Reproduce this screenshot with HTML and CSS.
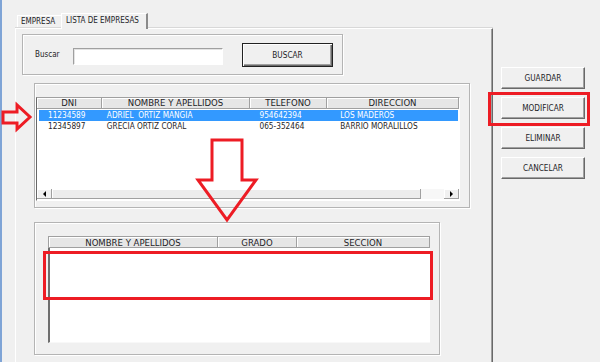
FILE: index.html
```html
<!DOCTYPE html>
<html>
<head>
  <meta charset="utf-8">
  <title>Lista de empresas</title>
  <link rel="stylesheet" href="styles.css">
</head>
<body>
<div class="window">
  <div class="tabstrip">
    <div class="tab">EMPRESA</div>
    <div class="tab tab-active">LISTA DE EMPRESAS</div>
  </div>
  <div class="main">
    <div class="page">
      <div class="group search">
        <span class="label">Buscar</span>
        <input class="textbox" type="text">
        <button class="btn btn-default">BUSCAR</button>
      </div>

      <div class="group list-group">
        <div class="listview">
          <div class="lv-head">
            <div class="hcell c-dni">DNI</div>
            <div class="hcell c-nom">NOMBRE Y APELLIDOS</div>
            <div class="hcell c-tel">TELEFONO</div>
            <div class="hcell c-dir">DIRECCION</div>
          </div>
          <div class="lv-row selected">
            <div class="cell c-dni">11234589</div>
            <div class="cell c-nom">ADRIEL&nbsp; ORTIZ MANGIA</div>
            <div class="cell c-tel">954642394</div>
            <div class="cell c-dir">LOS MADEROS</div>
          </div>
          <div class="lv-row">
            <div class="cell c-dni">12345897</div>
            <div class="cell c-nom">GRECIA ORTIZ CORAL</div>
            <div class="cell c-tel">065-352464</div>
            <div class="cell c-dir">BARRIO MORALILLOS</div>
          </div>
          <div class="lv-fill"></div>
          <div class="hscroll">
            <div class="sb-btn"><span class="tri tri-left"></span></div>
            <div class="sb-thumb"></div>
            <div class="sb-track"></div>
            <div class="sb-btn"><span class="tri tri-right"></span></div>
          </div>
        </div>
      </div>

      <div class="group detail-group">
        <div class="grid">
          <div class="grid-head">
            <div class="hcell g-nom">NOMBRE Y APELLIDOS</div>
            <div class="hcell g-gra">GRADO</div>
            <div class="hcell g-sec">SECCION</div>
          </div>
          <div class="grid-body"></div>
        </div>
      </div>
    </div>

    <div class="actions">
      <button class="btn">GUARDAR</button>
      <button class="btn">MODIFICAR</button>
      <button class="btn">ELIMINAR</button>
      <button class="btn">CANCELAR</button>
    </div>
  </div>
</div>

<!-- marcas rojas encima de la captura -->
<div class="mark mark-modificar"></div>
<div class="mark mark-detalle"></div>
<svg class="arrow arrow-right" width="34" height="34" viewBox="0 0 34 34">
  <polygon points="3,12 17,12 17,5 30,17 17,29 17,23 3,23" />
</svg>
<svg class="arrow arrow-down" width="75" height="90" viewBox="0 0 75 90">
  <polygon points="22,5 52,5 52,45 66,45 37,85 8,45 22,45" />
</svg>
</body>
</html>
```

FILE: styles.css
```css
* {
  box-sizing: border-box;
}

body {
  margin: 0;
  width: 600px;
  height: 362px;
  overflow: hidden;
  position: relative;
  background: #f0f0f0;
  font-family: "Liberation Sans Narrow", "DejaVu Sans Condensed", "Liberation Sans", sans-serif;
  color: #1e1e28;
}

.window {
  height: 362px;
  border-left: 2px solid #7fa4d6;
  padding: 12px 0 0 13px;
}

/* pestañas */
.tabstrip {
  display: flex;
  align-items: flex-end;
  height: 16px;
  margin-left: 2px;
}

.tab {
  height: 13px;
  width: 44px;
  padding-left: 3px;
  font-size: 8px;
  line-height: 12px;
  white-space: nowrap;
  border-left: 1px solid #fff;
  border-top: 1px solid #fff;
}

.tab-active {
  position: relative;
  height: 16px;
  width: 87px;
  margin-bottom: -1px;
  padding-left: 4px;
  line-height: 13px;
  background: #f0f0f0;
  border-right: 2px solid #8a8a8a;
  z-index: 1;
}

.main {
  display: flex;
}

.page {
  width: 478px;
  height: 340px;
  padding: 5px 0 0 6px;
  border: 1px solid;
  border-color: #fff #696969 #696969 #fff;
  box-shadow: inset -1px 0 #a0a0a0, 0 -1px #d8d8d8;
}

.group {
  border: 1px solid #b4b4b4;
  box-shadow: inset 1px 1px #fff, 1px 1px #fff;
}

/* buscar */
.search {
  width: 321px;
  height: 41px;
  display: flex;
  align-items: center;
  padding-left: 12px;
}

.label {
  font-size: 8px;
  width: 38px;
}

.textbox {
  width: 150px;
  height: 17px;
  margin: 3px 0 0 0;
  border: 1px solid;
  border-color: #a0a0a0 #fff #fff #a0a0a0;
  box-shadow: inset 1px 1px #e3e3e3;
  background: #fff;
}

.btn {
  display: block;
  font-family: inherit;
  font-size: 8.2px;
  color: #1e1e28;
  background: #f0f0f0;
  border: 1px solid;
  border-color: #fff #696969 #696969 #fff;
  box-shadow: inset -1px -1px #a0a0a0;
  padding: 0;
}

.btn-default {
  width: 91px;
  height: 24px;
  margin-left: 19px;
  border-color: #222;
  box-shadow: inset 1px 1px #fff, inset -1px -1px #696969, inset -2px -2px #a0a0a0;
}

/* lista de empresas */
.list-group {
  width: 436px;
  height: 125px;
  margin: 8px 0 0 12px;
  padding: 13px 0 0 1px;
}

.listview {
  width: 424px;
  height: 104px;
  display: flex;
  flex-direction: column;
  background: #fff;
  border: 1px solid;
  border-color: #a0a0a0 #fff #fff #696969;
}

.lv-head,
.grid-head {
  display: flex;
  height: 11px;
  flex-shrink: 0;
}

.hcell {
  font-size: 9.5px;
  line-height: 10px;
  text-align: center;
  background: #e6e6e6;
  border-right: 1px solid #a0a0a0;
  border-bottom: 1px solid #a0a0a0;
  box-shadow: inset 1px 1px #fff;
  white-space: nowrap;
}

.c-dni { width: 65px; }
.c-nom { width: 148px; }
.c-tel { width: 77px; }
.c-dir { width: 132px; }

.lv-row {
  display: flex;
  height: 11px;
  margin: 0 1px 0 2px;
}

.lv-row.selected {
  margin-top: 1px;
  background: #3399ff;
  color: #fff;
}

.cell {
  font-size: 8.2px;
  line-height: 11px;
  white-space: nowrap;
}

.lv-row .c-dni { width: 63px; padding-left: 9px; }
.lv-row .c-nom { width: 148px; padding-left: 5px; }
.lv-row .c-tel { width: 77px; padding-left: 10px; }
.lv-row .c-dir { padding-left: 14px; }

.lv-fill {
  flex: 1;
}

.hscroll {
  display: flex;
  height: 10px;
  margin-bottom: 1px;
}

.sb-btn {
  width: 15px;
  display: flex;
  align-items: center;
  justify-content: center;
  background: #f0f0f0;
  border-right: 1px solid #a0a0a0;
  border-bottom: 1px solid #a0a0a0;
  box-shadow: inset 1px 1px #fff;
}

.sb-thumb {
  width: 369px;
  background: #ececec;
  border-right: 1px solid #a0a0a0;
  border-bottom: 1px solid #a0a0a0;
  box-shadow: inset 1px 1px #fff;
}

.sb-track {
  flex: 1;
  background: #f7f7f7;
}

.tri {
  width: 0;
  height: 0;
  border-top: 3px solid transparent;
  border-bottom: 3px solid transparent;
}

.tri-left { border-right: 3px solid #000; }
.tri-right { border-left: 3px solid #000; }

/* detalle */
.detail-group {
  width: 406px;
  height: 133px;
  margin: 14px 0 0 12px;
  padding: 13px 0 0 13px;
}

.grid {
  width: 382px;
}

.grid-head {
  height: 12px;
  border-top: 1px solid #a0a0a0;
  border-left: 1px solid #a0a0a0;
}

.grid-head .hcell {
  line-height: 11px;
}

.g-nom { width: 169px; }
.g-gra { width: 79px; }
.g-sec { width: 133px; }

.grid-body {
  height: 95px;
  background: #fff;
  border-left: 2px solid #6f6f6f;
  border-bottom: 1px solid #f8f8f8;
}

/* botones */
.actions {
  display: flex;
  flex-direction: column;
  gap: 8px;
  margin: 39px 0 0 8px;
}

.actions .btn {
  width: 84px;
  height: 22px;
}

/* marcas */
.mark {
  position: absolute;
  border: 3px solid #ed1c24;
}

.mark-modificar {
  left: 488px;
  top: 92px;
  width: 102px;
  height: 34px;
}

.mark-detalle {
  left: 43px;
  top: 251px;
  width: 390px;
  height: 49px;
}

.arrow {
  position: absolute;
}

.arrow polygon {
  fill: none;
  stroke: #ed1c24;
  stroke-width: 3;
}

.arrow-right {
  left: 0;
  top: 100px;
}

.arrow-down {
  left: 190px;
  top: 135px;
}
```
